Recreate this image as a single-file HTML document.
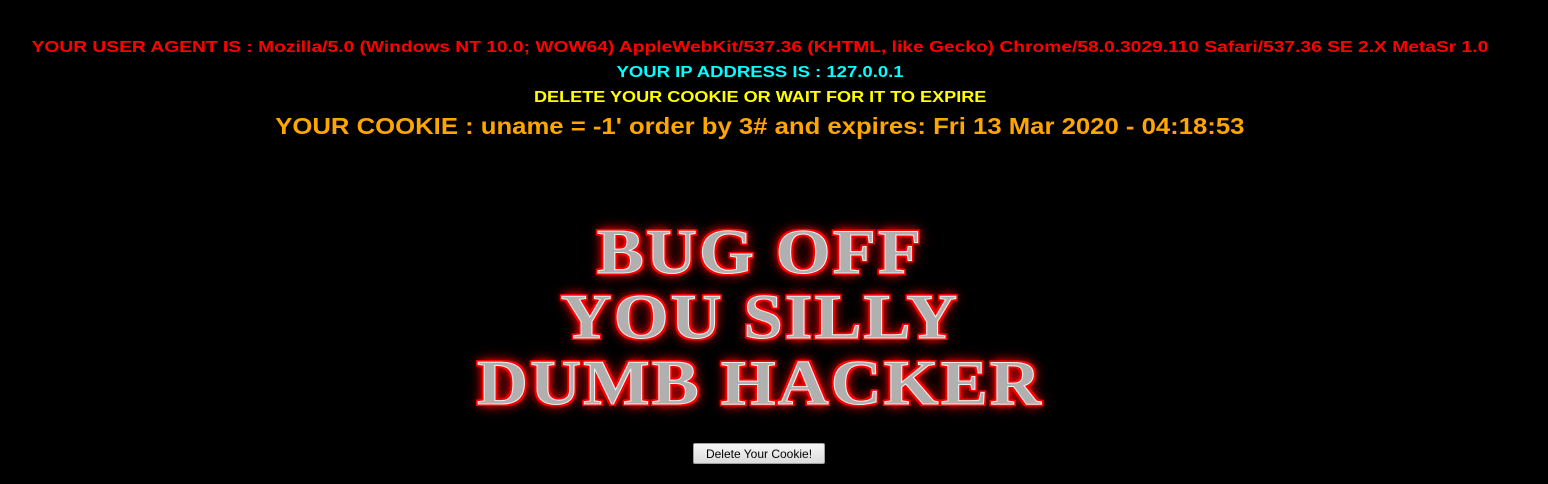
<!DOCTYPE html>
<html><head><meta charset="utf-8"><style>
html,body{margin:0;padding:0;background:#000;width:1548px;height:484px;overflow:hidden}
.c{position:absolute;left:0;width:1520px;text-align:center;font-family:"Liberation Sans",sans-serif;font-weight:bold;white-space:nowrap}
.c span{display:inline-block;transform-origin:center}
.big{position:absolute;left:0;width:1520px;text-align:center;font-family:"Liberation Serif",serif;font-weight:bold;font-size:64px;line-height:65px;color:#b0b0b0;letter-spacing:2px;transform:scaleX(1.1);
-webkit-text-stroke:1px #eee;
text-shadow:2px 0 0 #f00,-2px 0 0 #f00,0 2px 0 #f00,0 -2px 0 #f00,2px 2px 0 #f00,-2px -2px 0 #f00,2px -2px 0 #f00,-2px 2px 0 #f00,0 0 6px #f00,0 0 10px #f00,0 0 14px #b00}
button{position:absolute;left:693px;top:443px;width:132px;height:21px;font:12px "Liberation Sans",sans-serif;background:linear-gradient(#f6f6f6,#dcdcdc);border:1px solid #a0a0a0;border-radius:2px;padding:0;color:#000}
</style></head><body>
<div class="c" style="top:39px;font-size:16px;color:#ff0000"><span style="transform:scaleX(1.2)">YOUR USER AGENT IS : Mozilla/5.0 (Windows NT 10.0; WOW64) AppleWebKit/537.36 (KHTML, like Gecko) Chrome/58.0.3029.110 Safari/537.36 SE 2.X MetaSr 1.0</span></div>
<div class="c" style="top:64px;font-size:16px;color:#00ffff"><span style="transform:scaleX(1.157)">YOUR IP ADDRESS IS : 127.0.0.1</span></div>
<div class="c" style="top:89px;font-size:16px;color:#ffff00"><span style="transform:scaleX(1.13)">DELETE YOUR COOKIE OR WAIT FOR IT TO EXPIRE</span></div>
<div class="c" style="top:113px;font-size:23px;color:#ffa500"><span style="transform:scaleX(1.117)">YOUR COOKIE : uname = -1' order by 3# and expires: Fri 13 Mar 2020 - 04:18:53</span></div>
<div class="big" style="top:219px">BUG OFF</div>
<div class="big" style="top:284px">YOU SILLY</div>
<div class="big" style="top:350px">DUMB HACKER</div>
<button>Delete Your Cookie!</button>
</body></html>
